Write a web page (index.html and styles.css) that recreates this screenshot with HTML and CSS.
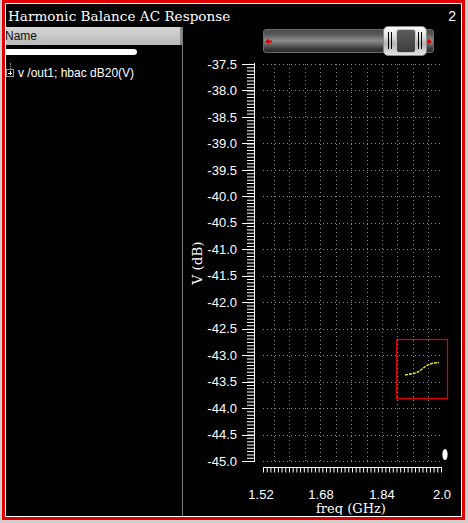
FILE: index.html
```html
<!DOCTYPE html>
<html>
<head>
<meta charset="utf-8">
<title>Harmonic Balance AC Response</title>
<link rel="stylesheet" href="styles.css">
</head>
<body>
<div class="screen">
  <div class="frame">
    <div class="inner">
      <div class="titlebar">
        <span class="title">Harmonic Balance AC Response</span>
        <span class="num">2</span>
      </div>
      <div class="main">
        <div class="tree">
          <div class="tree-head"><span>Name</span></div>
          <div class="redact"></div>
          <div class="tree-row">
            <span class="expander"><span class="stem"></span></span>
            <span class="label">v /out1; hbac dB20(V)</span>
          </div>
        </div>
        <div class="graph">
          <div class="slider-row">
            <div class="slider">
              <svg class="arrow" width="7" height="7" viewBox="0 0 7 7"><path d="M0 3.5L4 0.5V2.5H7V4.5H4V6.5Z" fill="#e00000"/></svg>
              <svg class="arrow" width="7" height="7" viewBox="0 0 7 7"><path d="M7 3.5L3 0.5V2.5H0V4.5H3V6.5Z" fill="#e00000"/></svg>
              <div class="thumb">
                <span class="grip grip-l"></span>
                <span class="knob"></span>
                <span class="grip grip-r"></span>
              </div>
            </div>
          </div>
          <svg class="plot" width="278" height="461" viewBox="183 54 278 461">
            <path class="grid" d="M263 64.5H441M263 90.5H441M263 117.5H441M263 143.5H441M263 170.5H441M263 196.5H441M263 223.5H441M263 249.5H441M263 276.5H441M263 302.5H441M263 329.5H441M263 355.5H441M263 382.5H441M263 408.5H441M263 435.5H441M263 461.5H441"/>
            <path class="grid" d="M274.5 64V462M289.5 64V462M305.5 64V462M320.5 64V462M336.5 64V462M351.5 64V462M367.5 64V462M382.5 64V462M397.5 64V462M413.5 64V462M428.5 64V462"/>
            <path class="axis" d="M254.5 63V462"/>
            <path class="axis" d="M242 64.5H254M242 90.5H254M242 117.5H254M242 143.5H254M242 170.5H254M242 196.5H254M242 223.5H254M242 249.5H254M242 276.5H254M242 302.5H254M242 329.5H254M242 355.5H254M242 382.5H254M242 408.5H254M242 435.5H254M242 461.5H254"/>
            <line class="minor" x1="250.5" y1="64" x2="250.5" y2="462" stroke-width="7" stroke-dasharray="1 2.3083"/>
            <path class="axis" d="M263 467.5H442"/>
            <line class="minor" x1="263" y1="470" x2="442" y2="470" stroke-width="5" stroke-dasharray="1 2.708"/>
            <g class="ylab">
              <text x="237" y="68.6">-37.5</text>
              <text x="237" y="95.1">-38.0</text>
              <text x="237" y="121.5">-38.5</text>
              <text x="237" y="148">-39.0</text>
              <text x="237" y="174.5">-39.5</text>
              <text x="237" y="201">-40.0</text>
              <text x="237" y="227.4">-40.5</text>
              <text x="237" y="253.9">-41.0</text>
              <text x="237" y="280.4">-41.5</text>
              <text x="237" y="306.8">-42.0</text>
              <text x="237" y="333.3">-42.5</text>
              <text x="237" y="359.8">-43.0</text>
              <text x="237" y="386.2">-43.5</text>
              <text x="237" y="412.7">-44.0</text>
              <text x="237" y="439.2">-44.5</text>
              <text x="237" y="465.6">-45.0</text>
            </g>
            <g class="xlab">
              <text x="261" y="498.5">1.52</text>
              <text x="321" y="498.5">1.68</text>
              <text x="382" y="498.5">1.84</text>
              <text x="442" y="498.5">2.0</text>
            </g>
            <text class="serif xtitle" x="351" y="512.5" text-anchor="middle">freq (GHz)</text>
            <text class="serif" transform="translate(201.5 263) rotate(-90)" text-anchor="middle">V (dB)</text>
            <rect class="zoombox" x="396.5" y="339.5" width="51" height="59"/>
            <polyline class="trace" points="405,375 410,374 414,373.5 418,372 422,369 426,366 430,364 434,363 439,362.5"/>
            <ellipse cx="445" cy="454.5" rx="2.6" ry="5.5" fill="#fff"/>
          </svg>
        </div>
      </div>
    </div>
  </div>
</div>
</body>
</html>
```
FILE: styles.css
```css
* { box-sizing: border-box; }
html, body {
  margin: 0;
  width: 468px;
  height: 523px;
  overflow: hidden;
  background: #cfcfcf;
}
.screen {
  height: 523px;
  padding: 0 3px 3px 2px;
}
.frame {
  height: 100%;
  border: 3px solid #e00000;
}
.inner {
  height: 100%;
  border: 1px solid #ffffff;
  background: #000;
  display: flex;
  flex-direction: column;
}
.titlebar {
  height: 23px;
  flex: none;
  display: flex;
  align-items: center;
  justify-content: space-between;
  padding: 0 5px 0 2px;
  color: #fff;
}
.title {
  font-family: "DejaVu Serif", serif;
  font-size: 13.6px;
}
.num {
  font-family: "Liberation Sans", sans-serif;
  font-size: 14px;
}
.main {
  flex: 1;
  display: flex;
  min-height: 0;
}
.tree {
  width: 177px;
  flex: none;
  border-right: 1px solid #7c7c7c;
  display: flex;
  flex-direction: column;
}
.tree-head {
  height: 18px;
  flex: none;
  background: linear-gradient(#d6d6d6, #b8b8b8);
  border-right: 2px solid #8a8a8a;
  display: flex;
  align-items: center;
  font-family: "Liberation Sans", sans-serif;
  font-size: 12px;
  color: #111;
  overflow: hidden;
}
.tree-head span { margin-left: -1px; }
.redact {
  margin-top: 4px;
  width: 131px;
  height: 6px;
  background: #fff;
  border-radius: 0 3px 3px 0;
}
.tree-row {
  margin-top: 12px;
  height: 12px;
  display: flex;
  align-items: center;
  gap: 4px;
}
.expander {
  position: relative;
  width: 8px;
  height: 8px;
  border: 1px solid #9a9a9a;
  background:
    linear-gradient(#fff, #fff) center / 4px 1px no-repeat,
    linear-gradient(#fff, #fff) center / 1px 4px no-repeat,
    #000;
}
.stem {
  position: absolute;
  left: 3px;
  top: -7px;
  height: 6px;
  border-left: 1px dotted #888;
}
.label {
  font-family: "Liberation Sans", sans-serif;
  font-size: 12px;
  line-height: 12px;
  color: #fff;
}
.graph {
  flex: 1;
  display: flex;
  flex-direction: column;
}
.slider-row {
  height: 27px;
  flex: none;
  padding: 2px 0 0 80px;
}
.slider {
  position: relative;
  width: 171px;
  height: 24px;
  border: 1px solid #6a6a6a;
  border-radius: 3px;
  background: linear-gradient(#4a4a4a 0%, #5a5a5a 20%, #8c8c8c 48%, #6a6a6a 65%, #3a3a3a 85%, #2a2a2a 100%);
  display: flex;
  align-items: center;
  justify-content: space-between;
  padding: 0 1px 0 1px;
}
.arrow { display: block; }
.thumb {
  position: absolute;
  left: 119px;
  top: -4px;
  width: 44px;
  height: 30px;
  border: 1px solid #8a8a8a;
  border-radius: 5px;
  background: linear-gradient(#fbfbfb, #dedede 35%, #b4b4b4 60%, #e4e4e4 100%);
}
.knob {
  position: absolute;
  left: 12px;
  top: 2px;
  width: 20px;
  height: 24px;
  border: 1px solid #c8c8c8;
  border-radius: 3px;
  background: linear-gradient(#5e5e5e, #3c3c3c);
}
.grip {
  position: absolute;
  top: 5px;
  width: 4px;
  height: 17px;
  border-left: 1px solid #000;
  border-right: 1px solid #000;
}
.grip-l { left: 4px; }
.grip-r { left: 34px; }
.plot { display: block; }
.plot .grid {
  fill: none;
  stroke: #8a8a8a;
  stroke-width: 1;
  stroke-dasharray: 1 3;
}
.plot .axis {
  fill: none;
  stroke: #fff;
  stroke-width: 1;
}
.plot .minor { stroke: #fff; }
.plot text {
  font-family: "Liberation Sans", sans-serif;
  font-size: 13px;
  fill: #fff;
}
.plot .ylab text { text-anchor: end; }
.plot .xlab text { text-anchor: middle; }
.plot text.serif {
  font-family: "DejaVu Serif", serif;
  font-size: 13.5px;
}
.plot text.xtitle { font-size: 13px; }
.zoombox {
  fill: none;
  stroke: #e00000;
  stroke-width: 1.2;
}
.trace {
  fill: none;
  stroke: #f0f000;
  stroke-width: 1.4;
  stroke-dasharray: 3 1;
}
```
